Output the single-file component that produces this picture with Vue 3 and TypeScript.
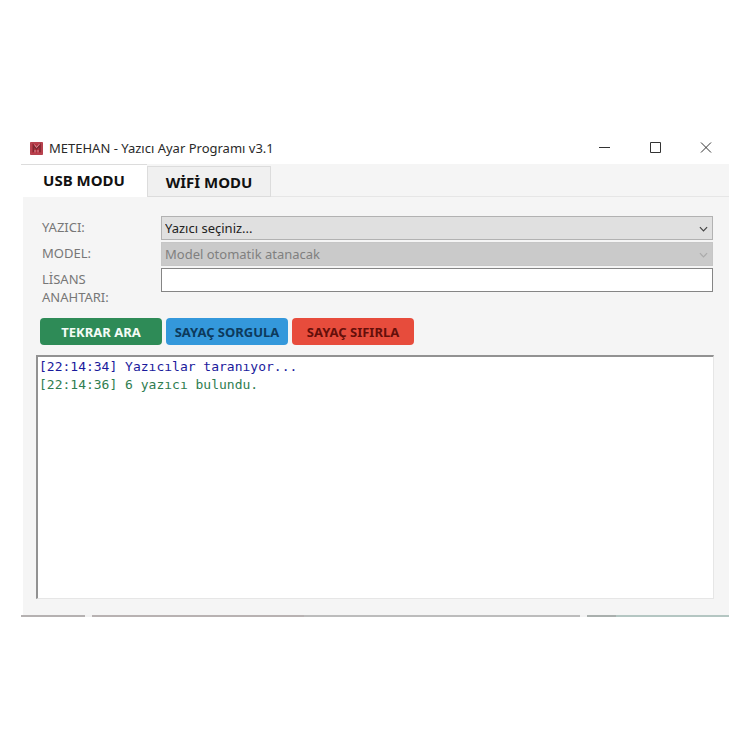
<script setup lang="ts">
import { ref } from 'vue'

type Mode = 'usb' | 'wifi'
interface LogEntry {
  time: string
  text: string
  kind: 'info' | 'success'
}

const tabs: { id: Mode; label: string }[] = [
  { id: 'usb', label: 'USB MODU' },
  { id: 'wifi', label: 'WİFİ MODU' },
]
const activeTab = ref<Mode>('usb')
const licenseKey = ref('')

const log = ref<LogEntry[]>([
  { time: '22:14:34', text: 'Yazıcılar taranıyor...', kind: 'info' },
  { time: '22:14:36', text: '6 yazıcı bulundu.', kind: 'success' },
])
</script>

<template>
  <main class="window">
    <header class="titlebar">
      <svg class="logo" viewBox="0 0 13 13" aria-hidden="true">
        <rect width="13" height="13" rx="1" fill="#b5303e" />
        <path d="M1 1h11v11H1z" fill="none" stroke="#b8525c" />
        <path d="M3.5 10V3.5L6.5 7 10 3v7" fill="none" stroke="#7d2a33" stroke-width="1.5" />
        <path d="M4.500 2.500l2 3L9.500 2M5 8v2.500M8 8v2.500" fill="none" stroke="#dc9aa0" stroke-width="0.9" />
      </svg>
      <h1 class="title">METEHAN - Yazıcı Ayar Programı v3.1</h1>
      <div class="controls">
        <button type="button" class="control" aria-label="Simge durumuna küçült">
          <svg viewBox="0 0 12 12"><path d="M1 5.5h11" /></svg>
        </button>
        <button type="button" class="control" aria-label="Ekranı kapla">
          <svg viewBox="0 0 12 12"><path d="M1.500 .5h10v10h-10z" /></svg>
        </button>
        <button type="button" class="control" aria-label="Kapat">
          <svg viewBox="0 0 12 12"><path d="M1 .5l10 10M11 .5l-10 10" /></svg>
        </button>
      </div>
    </header>

    <nav class="tabs" role="tablist">
      <button
        v-for="tab in tabs"
        :key="tab.id"
        type="button"
        role="tab"
        class="tab"
        :class="{ active: tab.id === activeTab }"
        :aria-selected="tab.id === activeTab"
        @click="activeTab = tab.id"
      >
        {{ tab.label }}
      </button>
    </nav>

    <section class="panel">
      <form class="form" @submit.prevent>
        <label for="printer">YAZICI:</label>
        <div class="combo">
          <select id="printer">
            <option>Yazıcı seçiniz...</option>
          </select>
          <svg class="chevron" viewBox="0 0 10 6" aria-hidden="true"><path d="M1 1l4 4 4-4" /></svg>
        </div>
        <label for="model">MODEL:</label>
        <div class="combo disabled">
          <select id="model" disabled>
            <option>Model otomatik atanacak</option>
          </select>
          <svg class="chevron" viewBox="0 0 10 6" aria-hidden="true"><path d="M1 1l4 4 4-4" /></svg>
        </div>
        <label for="license">LİSANS ANAHTARI:</label>
        <input id="license" v-model="licenseKey" type="text" />
      </form>

      <div class="actions">
        <button type="button" class="action scan">TEKRAR ARA</button>
        <button type="button" class="action query">SAYAÇ SORGULA</button>
        <button type="button" class="action reset">SAYAÇ SIFIRLA</button>
      </div>

      <div class="log" role="log">
        <p v-for="entry in log" :key="entry.time" :class="entry.kind">[{{ entry.time }}] {{ entry.text }}</p>
      </div>
    </section>
    <div class="edge"></div>
  </main>
</template>

<style>
body {
  background: #fff;
}
</style>

<style scoped>
.window {
  box-sizing: border-box;
  min-height: 100vh;
  padding: 132px 21px 133px;
  display: flex;
  flex-direction: column;
  font-family: 'Noto Sans', 'Open Sans', sans-serif;
  font-size: 13px;
  color: #2a2a2a;
}

button,
select,
input {
  box-sizing: border-box;
  margin: 0;
  font: inherit;
}

.titlebar {
  display: flex;
  align-items: center;
  height: 32px;
  padding-left: 9px;
}

.logo {
  width: 13px;
  height: 13px;
  margin-right: 6px;
}

.title {
  margin: 0;
  font-size: 13px;
  font-weight: 400;
  white-space: nowrap;
}

.controls {
  display: flex;
  gap: 4px;
  margin-left: auto;
}

.control {
  display: grid;
  place-items: center;
  width: 47px;
  height: 32px;
  padding: 0;
  border: 0;
  background: none;
}

.control svg {
  width: 12px;
  height: 12px;
  fill: none;
  stroke: #333;
}

.tabs {
  display: flex;
  align-items: flex-end;
  height: 33px;
  background: #f5f5f5;
  box-shadow: inset 0 -1px #e6e6e6;
}

.tab {
  width: 124px;
  height: 31px;
  padding: 0;
  border: 1px solid #dcdcdc;
  background: #f0f0f0;
  font-size: 15px;
  font-weight: 700;
  color: #111;
}

.tab.active {
  width: 126px;
  height: 33px;
  padding-bottom: 2px;
  border-width: 1px 0 0;
  background: #fff;
}

.panel {
  flex: 1;
  display: flex;
  flex-direction: column;
  margin-left: 2px;
  padding: 19px 15px 16px 13px;
  background: #f5f5f5;
}

.edge {
  height: 2px;
  background: linear-gradient(
    to right,
    #b5b1b1 9%,
    #f2f2f2 9% 10%,
    #b8b2b2 10% 40%,
    #bcbcbc 40% 79%,
    #f2f2f2 79% 80%,
    #a9afad 80% 84%,
    #b4c6c2 84%
  );
}

.form {
  display: grid;
  grid-template-columns: 114px 1fr;
  column-gap: 5px;
  row-gap: 2px;
  align-items: start;
  padding: 0 1px 0 6px;
}

.form label {
  padding-top: 2px;
  line-height: 18px;
  color: #777;
}

.form label[for='license'] {
  width: 80px;
}

.combo {
  position: relative;
}

.combo select,
.form input {
  display: block;
  width: 100%;
  height: 24px;
  padding: 0 3px;
  border: 1px solid #b2b2b2;
  border-radius: 0;
  background: #e0e0e0;
  color: #222;
  appearance: none;
}

.combo.disabled select {
  border-color: #c6c6c6;
  background: #cacaca;
  color: #808080;
  opacity: 1;
}

.form input {
  border-color: #858585;
  background: #fff;
}

.chevron {
  position: absolute;
  top: 10px;
  right: 5px;
  width: 9px;
  height: 6px;
  fill: none;
  stroke: #444;
  stroke-width: 1.3;
  pointer-events: none;
}

.disabled .chevron {
  stroke: #aaa;
}

.actions {
  display: flex;
  gap: 4px;
  padding: 12px 4px 10px;
}

.action {
  width: 122px;
  height: 27px;
  padding: 0;
  border: 0;
  border-radius: 4px;
  font-weight: 700;
  white-space: nowrap;
}

.scan {
  background: #2e8b57;
  color: #f4fbf6;
}

.query {
  background: #3498db;
  color: #0d3a5c;
}

.reset {
  background: #e74c3c;
  color: #650f0a;
}

.log {
  flex: 1;
  padding: 1px;
  border: solid;
  border-width: 2px 1px 1px 2px;
  border-color: #929292 #e6e6e6 #e6e6e6 #929292;
  background: #fff;
  font-family: 'DejaVu Sans Mono', monospace;
  font-size: 13px;
  line-height: 18px;
}

.log p {
  margin: 0;
}

.info {
  color: #1a1a9c;
}

.success {
  color: #2f7d50;
}
</style>
